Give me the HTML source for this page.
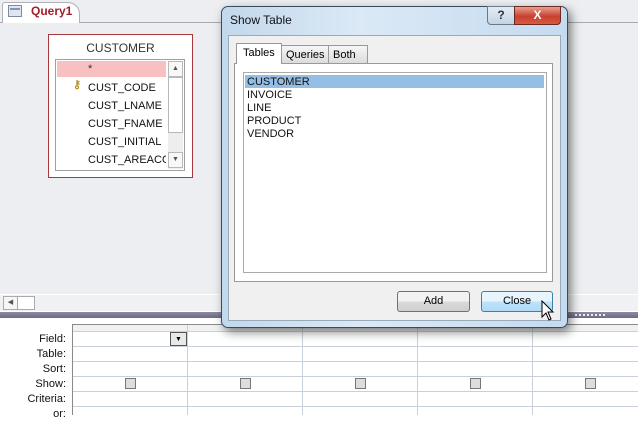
<!DOCTYPE html>
<html><head><meta charset="utf-8"><style>
*{margin:0;padding:0;box-sizing:border-box}
body{width:638px;height:415px;overflow:hidden;background:#fff;font-family:"Liberation Sans",sans-serif;position:relative;font-size:11px}
.a{position:absolute}
</style></head><body>
<div class="a" style="left:0;top:0;width:638px;height:294px;background:#eceef1"></div>
<div class="a" style="left:0;top:22px;width:638px;height:1px;background:#a8aab0"></div>
<div class="a" style="left:2px;top:2px;width:78px;height:21px;background:#fff;border:1px solid #b0b2b8;border-bottom:none;border-radius:3px 12px 0 0"></div>
<div class="a" style="left:8px;top:5px;width:14px;height:12px;border:1px solid #7c8ca0;background:#dfe6ef"></div>
<div class="a" style="left:10px;top:8px;width:10px;height:2px;background:#8096b4"></div>
<div class="a" style="left:31px;top:4px;color:#a0202a;font-size:12px;font-weight:bold">Query1</div>
<div class="a" style="left:48px;top:34px;width:145px;height:144px;background:#fff;border:1px solid #a8383c"></div>
<div class="a" style="left:48px;top:41px;width:145px;text-align:center;color:#333;font-size:12px">CUSTOMER</div>
<div class="a" style="left:55px;top:59px;width:130px;height:112px;border:1px solid #a0a0a0"></div>
<div class="a" style="left:57px;top:61px;width:109px;height:16px;background:#f8c0c0"></div>
<div class="a" style="left:88px;top:63px;color:#333">*</div>
<div class="a" style="left:168px;top:61px;width:15px;height:108px;background:#eee"></div>
<div class="a" style="left:168px;top:61px;width:15px;height:16px;border:1px solid #b8b8b8;background:#f8f8f8;font-size:7px;color:#555;text-align:center;line-height:14px">▲</div>
<div class="a" style="left:168px;top:77px;width:15px;height:56px;border:1px solid #b8b8b8;background:#fff"></div>
<div class="a" style="left:168px;top:152px;width:15px;height:16px;border:1px solid #b8b8b8;background:#f8f8f8;font-size:7px;color:#555;text-align:center;line-height:14px">▼</div>
<div class="a" style="left:73px;top:78px;color:#b89020;font-size:11px;font-weight:bold">⚷</div>
<div class="a" style="left:88px;top:79px;line-height:18px;color:#111;width:78px;overflow:hidden;white-space:nowrap">CUST_CODE<br>CUST_LNAME<br>CUST_FNAME<br>CUST_INITIAL<br>CUST_AREACODE</div>
<div class="a" style="left:0;top:294px;width:638px;height:18px;background:#f0f1f3;border-top:1px solid #fff;border-bottom:1px solid #fff"></div>
<div class="a" style="left:3px;top:296px;width:15px;height:14px;border:1px solid #aaa;background:#f6f6f6;font-size:7px;color:#555;line-height:12px;text-align:center">◀</div>
<div class="a" style="left:17px;top:296px;width:18px;height:14px;border:1px solid #aaa;background:#fff"></div>
<div class="a" style="left:0;top:312px;width:638px;height:6px;background:linear-gradient(#8e8aa2,#6e6a88)"></div>
<div class="a" style="left:575px;top:314px;width:30px;height:2px;border-top:2px dotted #eee"></div>
<div class="a" style="left:72px;top:324px;width:566px;height:91px;border-left:1px solid #8a8a8a;border-top:1px solid #8a8a8a"></div>
<div class="a" style="left:73px;top:325px;width:565px;height:7px;background:#eff1f3;border-bottom:1px solid #c8d0dc"></div>
<div class="a" style="left:73px;top:346px;width:565px;height:1px;background:#c8d0dc"></div>
<div class="a" style="left:73px;top:361px;width:565px;height:1px;background:#c8d0dc"></div>
<div class="a" style="left:73px;top:376px;width:565px;height:1px;background:#c8d0dc"></div>
<div class="a" style="left:73px;top:391px;width:565px;height:1px;background:#c8d0dc"></div>
<div class="a" style="left:73px;top:406px;width:565px;height:1px;background:#c8d0dc"></div>
<div class="a" style="left:187px;top:325px;width:1px;height:90px;background:#c8d0dc"></div>
<div class="a" style="left:302px;top:325px;width:1px;height:90px;background:#c8d0dc"></div>
<div class="a" style="left:417px;top:325px;width:1px;height:90px;background:#c8d0dc"></div>
<div class="a" style="left:532px;top:325px;width:1px;height:90px;background:#c8d0dc"></div>
<div class="a" style="left:170px;top:332px;width:17px;height:14px;border:1px solid #555;background:#e8e8e8;font-size:7px;text-align:center;line-height:13px">▼</div>
<div class="a" style="left:0;top:332px;width:66px;text-align:right;line-height:15px;color:#111;font-size:11px">Field:<br>Table:<br>Sort:<br>Show:<br>Criteria:<br>or:</div>
<div class="a" style="left:125px;top:378px;width:11px;height:11px;border:1px solid #777;background:#ddd"></div>
<div class="a" style="left:240px;top:378px;width:11px;height:11px;border:1px solid #777;background:#ddd"></div>
<div class="a" style="left:355px;top:378px;width:11px;height:11px;border:1px solid #777;background:#ddd"></div>
<div class="a" style="left:470px;top:378px;width:11px;height:11px;border:1px solid #777;background:#ddd"></div>
<div class="a" style="left:585px;top:378px;width:11px;height:11px;border:1px solid #777;background:#ddd"></div>
<div class="a" style="left:221px;top:6px;width:347px;height:322px;border:1px solid #3a4a5a;border-radius:7px;background:linear-gradient(90deg,#c2d8ec,#dbe9f6 40%,#c5dbef);box-shadow:3px 4px 10px rgba(0,0,0,.5)"></div>
<div class="a" style="left:230px;top:13px;font-size:12px;color:#111">Show Table</div>
<div class="a" style="left:487px;top:6px;width:28px;height:19px;border:1px solid #6a7a8a;border-radius:0 0 0 4px;background:linear-gradient(#e4ecf5,#c4d4e4);text-align:center;font-size:12px;color:#333;font-weight:bold;line-height:17px">?</div>
<div class="a" style="left:514px;top:6px;width:47px;height:19px;border:1px solid #6a2a20;border-radius:0 0 4px 0;background:linear-gradient(#e8a090,#c84030 55%,#d85a40);text-align:center;font-size:12px;color:#fff;font-weight:bold;line-height:17px">X</div>
<div class="a" style="left:228px;top:35px;width:333px;height:286px;background:#f0f0f0;border:1px solid #9ab"></div>
<div class="a" style="left:234px;top:63px;width:319px;height:219px;background:#fff;border:1px solid #999"></div>
<div class="a" style="left:281px;top:45px;width:48px;height:19px;border:1px solid #999;background:linear-gradient(#f6f6f6,#dcdcdc);font-size:11px;padding:3px 0 0 4px">Queries</div>
<div class="a" style="left:328px;top:45px;width:40px;height:19px;border:1px solid #999;background:linear-gradient(#f6f6f6,#dcdcdc);font-size:11px;padding:3px 0 0 4px">Both</div>
<div class="a" style="left:236px;top:43px;width:46px;height:21px;border:1px solid #999;border-bottom:none;background:#fff;font-size:11px;padding:3px 0 0 6px">Tables</div>
<div class="a" style="left:243px;top:72px;width:304px;height:201px;border:1px solid #aaa;background:#fff"></div>
<div class="a" style="left:245px;top:75px;width:299px;height:13px;background:#95bee4"></div>
<div class="a" style="left:247px;top:76px;line-height:13px;color:#111;font-size:11px">CUSTOMER<br>INVOICE<br>LINE<br>PRODUCT<br>VENDOR</div>
<div class="a" style="left:397px;top:291px;width:73px;height:21px;border:1px solid #3c7fb1;border-radius:3px;background:linear-gradient(#f2f2f2 50%,#dadada 50%,#cfcfcf);text-align:center;line-height:19px;font-size:11px">Add</div>
<div class="a" style="left:481px;top:291px;width:72px;height:21px;border:1px solid #3c7fb1;border-radius:3px;background:linear-gradient(#e8f5fd 50%,#bfe3f8 50%,#aedbf6);text-align:center;line-height:19px;font-size:11px">Close</div>
<svg class="a" style="left:541px;top:300px" width="14" height="22" viewBox="0 0 14 22"><path d="M1 1 L1 17 L5 13 L8 20 L10 19 L7 12 L12 12 Z" fill="#fff" stroke="#000" stroke-width="1"/></svg>
</body></html>
